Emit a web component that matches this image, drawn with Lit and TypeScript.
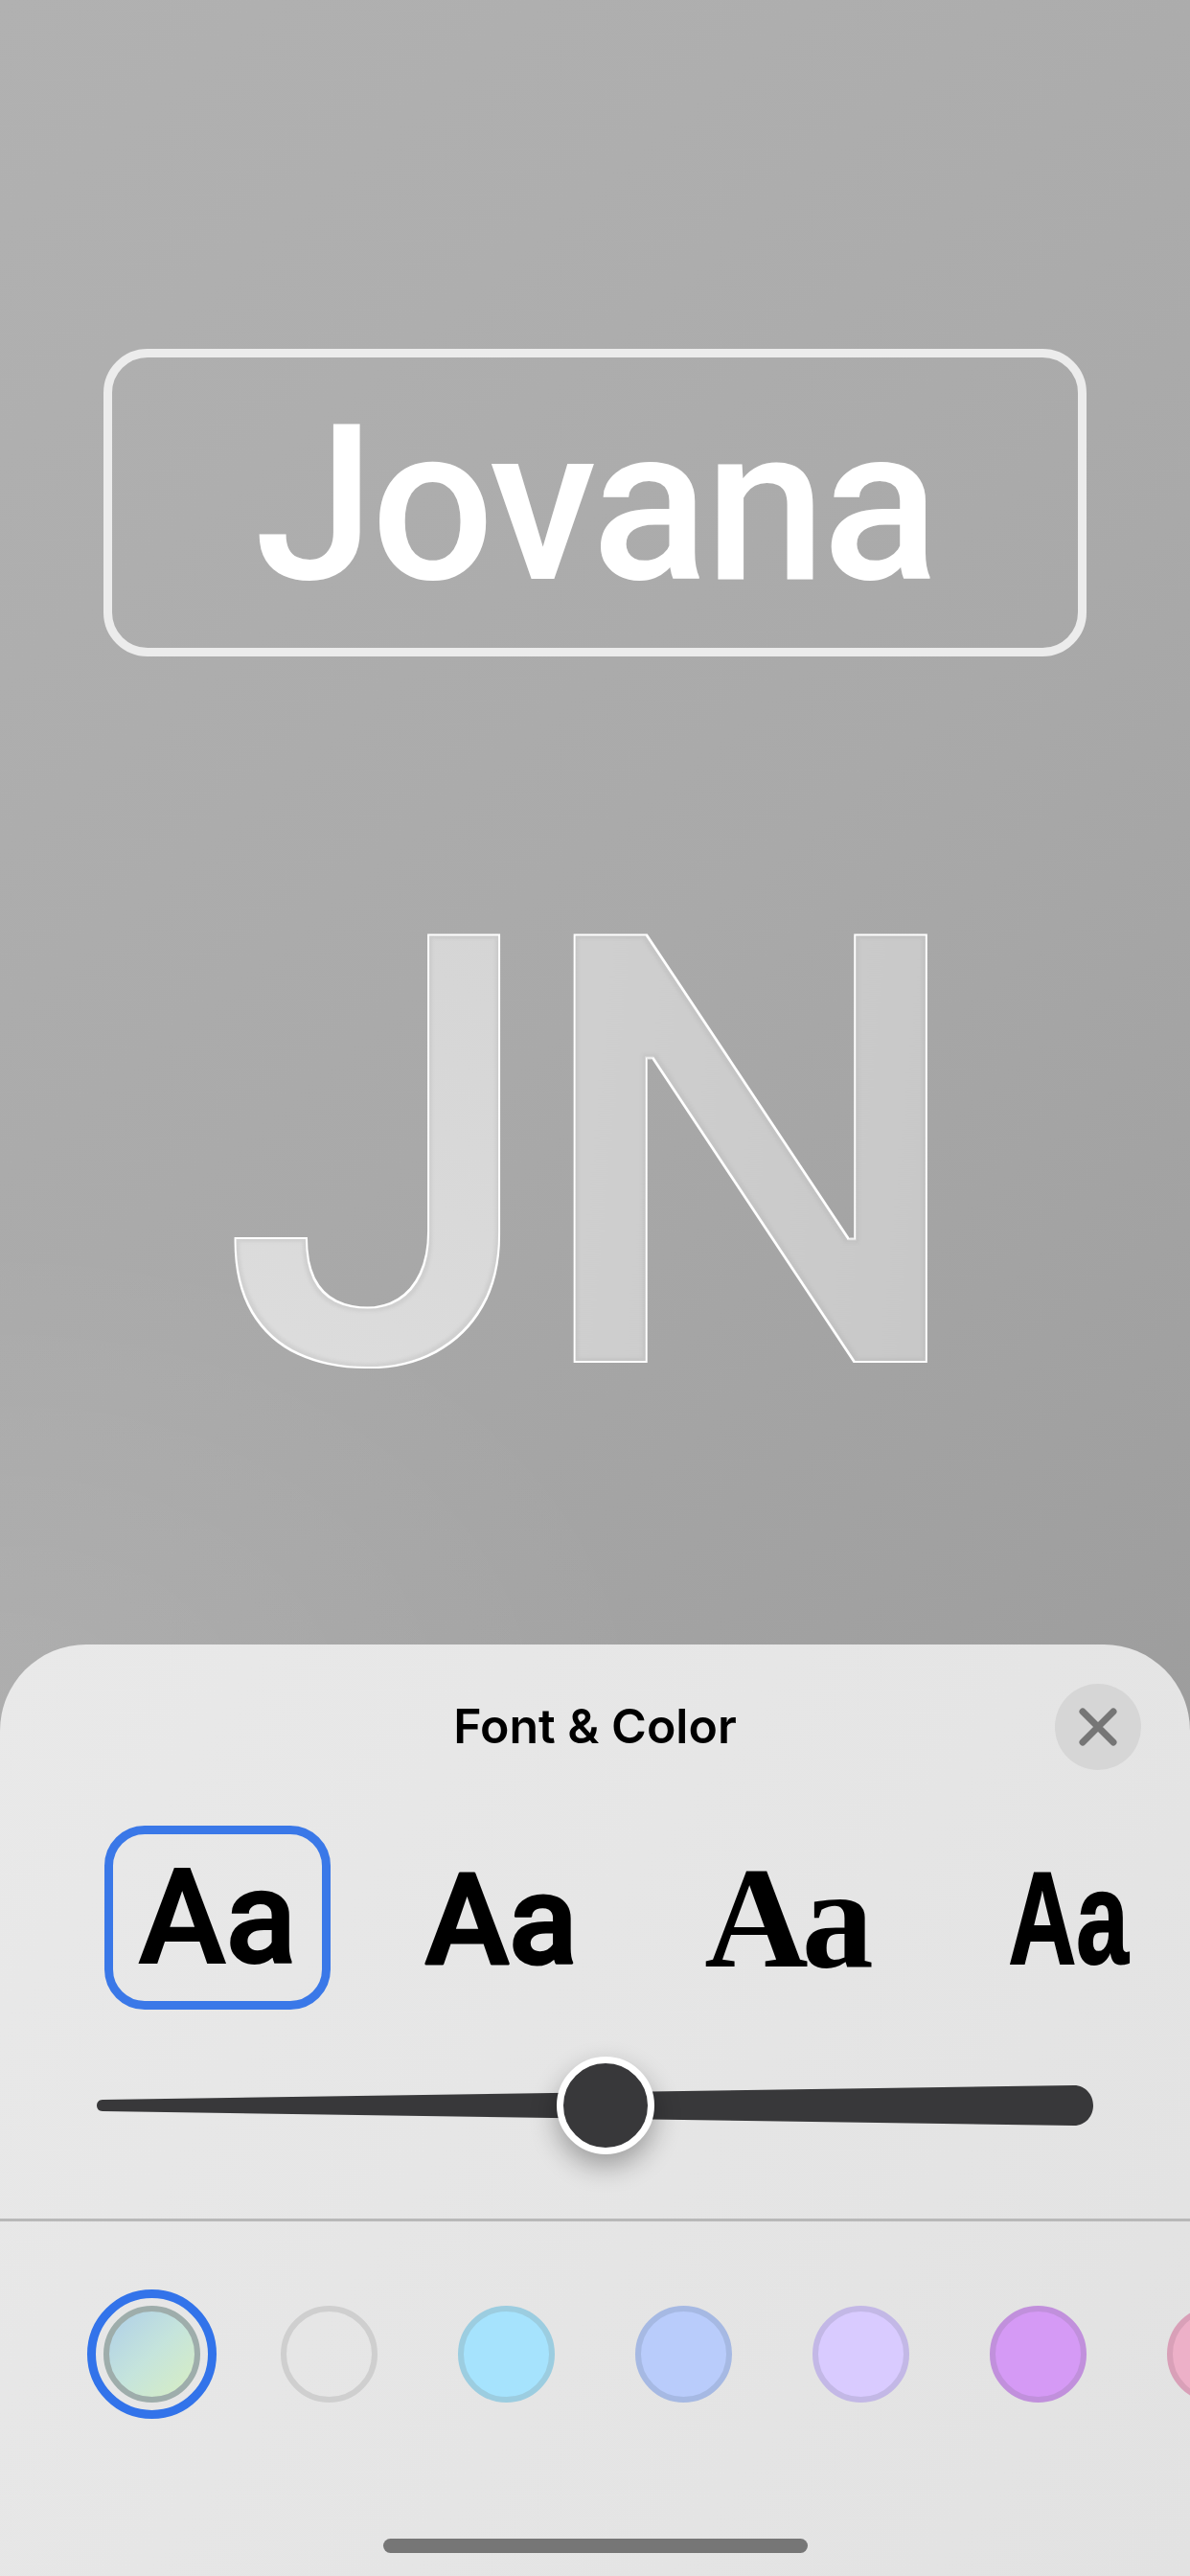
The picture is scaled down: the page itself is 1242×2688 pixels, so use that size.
import { LitElement, html, css, svg } from "lit";
import { customElement } from "lit/decorators.js";
import { styleMap } from "lit/directives/style-map.js";

const SWATCHES = [
  { bg: "transparent", ring: "#cfcfcf" },
  { bg: "#a6e3fd", ring: "#9ccde0" },
  { bg: "#b9ccfb", ring: "#a6b9e3" },
  { bg: "#d9cbff", ring: "#c3b8e6" },
  { bg: "#d59af5", ring: "#c190dc" },
  { bg: "#edb0c8", ring: "#d9a0b8" },
];

const emboss = (id: string, erode: string) => svg`
  <filter id=${id} filterUnits="userSpaceOnUse" x="-200" y="-700" width="1000" height="900" color-interpolation-filters="sRGB">
    <feMorphology in="SourceGraphic" operator="erode" radius=${erode} result="body" />
    <feMorphology in="body" operator="dilate" radius="1.6" result="outer" />
    <feFlood flood-color="#ffffff" result="white" />
    <feComposite in="white" in2="outer" operator="in" result="edge" />
    <feMorphology in="body" operator="erode" radius="3" result="core" />
    <feGaussianBlur in="core" stdDeviation="1.5" result="soft" />
    <feFlood flood-color="#a8a8a8" flood-opacity="0.22" result="grey" />
    <feComposite in="grey" in2="body" operator="in" result="greyIn" />
    <feComposite in="greyIn" in2="soft" operator="out" result="band" />
    <feMerge>
      <feMergeNode in="edge" />
      <feMergeNode in="body" />
      <feMergeNode in="band" />
    </feMerge>
  </filter>
`;

@customElement("app-root")
export class AppRoot extends LitElement {
  static styles = css`
    :host {
      display: flex;
      flex-direction: column;
      width: 1242px;
      height: 2688px;
      overflow: hidden;
      font-family: Roboto, "Liberation Sans", sans-serif;
      background-color: #a5a5a5;
      background-image:
        radial-gradient(700px 500px at 0 1780px, rgba(255, 255, 255, 0.08), transparent),
        linear-gradient(140deg, #b1b1b1 0%, #aeaeae 25%, #a9a9a9 55%, #9d9d9d 100%);
      background-size: 100% 1810px;
      background-repeat: no-repeat;
    }
    .stage {
      height: 1716px;
      flex: none;
      padding: 364px 108px 0;
      box-sizing: border-box;
    }
    .name {
      box-sizing: border-box;
      height: 321px;
      padding-top: 4px;
      border: 9px solid #ececec;
      border-radius: 46px;
      display: flex;
      align-items: center;
      justify-content: center;
      color: #fff;
      font-size: 226px;
      font-weight: 500;
      line-height: 1;
      letter-spacing: -3.5px;
    }
    .mono {
      display: block;
      margin: 135px 0 0 -108px;
    }
    .mono text {
      font-family: Roboto, "Liberation Sans", sans-serif;
      font-size: 624px;
      font-weight: 500;
    }
    .panel {
      flex: 1;
      border-radius: 90px 90px 0 0;
      background: linear-gradient(125deg, #e9e9e9, #e2e2e2);
      display: flex;
      flex-direction: column;
      overflow: hidden;
    }
    .head {
      position: relative;
      height: 172px;
      box-sizing: border-box;
      padding-top: 40px;
      text-align: center;
      font-family: Inter, sans-serif;
      font-size: 50px;
      font-weight: 600;
      line-height: 90px;
      color: #000;
    }
    .close {
      position: absolute;
      top: 41px;
      right: 51px;
      width: 90px;
      height: 90px;
      border-radius: 50%;
      background: #d6d6d6;
      display: flex;
      align-items: center;
      justify-content: center;
    }
    .fonts {
      display: flex;
      height: 192px;
      margin-top: 17px;
      padding-left: 109px;
      align-items: stretch;
    }
    .opt {
      display: flex;
      align-items: center;
      justify-content: center;
      flex: none;
      font-size: 137px;
      line-height: 1;
      color: #000;
      box-sizing: border-box;
    }
    .o1 {
      width: 236px;
      border: 9px solid #3a78e8;
      border-radius: 42px;
      font-weight: 500;
      -webkit-text-stroke: 2px #000;
    }
    .o2 {
      width: 156px;
      margin-left: 99px;
    }
    .o2 svg {
      overflow: visible;
    }
    .o2 text {
      font-family: Roboto, sans-serif;
      font-size: 132px;
      font-weight: 500;
      stroke: #000;
      stroke-width: 3px;
      stroke-linejoin: round;
    }
    .o3 {
      width: 172px;
      margin-left: 134px;
      font-family: "Liberation Serif", serif;
      font-size: 150px;
      font-weight: 700;
      letter-spacing: -7px;
    }
    .o4 {
      width: 123px;
      margin-left: 148px;
      font-family: "Liberation Sans", sans-serif;
      font-size: 138px;
      font-weight: 700;
    }
    .o4 span {
      display: inline-block;
      transform: scaleX(0.71);
      -webkit-text-stroke: 2px #000;
    }
    .slider {
      position: relative;
      height: 102px;
      margin-top: 49px;
      margin-left: 101px;
      width: 1040px;
    }
    .slider svg {
      display: block;
    }
    .thumb {
      position: absolute;
      left: 480px;
      top: 0;
      width: 102px;
      height: 102px;
      box-sizing: border-box;
      border-radius: 50%;
      background: #38383a;
      border: 7px solid #fff;
      box-shadow: 0 12px 28px rgba(0, 0, 0, 0.32);
    }
    .rule {
      height: 3px;
      background: #b8b8b8;
      margin-top: 67px;
    }
    .swatches {
      display: flex;
      align-items: center;
      gap: 84px;
      height: 135px;
      margin-top: 71px;
      padding-left: 91px;
    }
    .selected {
      flex: none;
      width: 135px;
      height: 135px;
      box-sizing: border-box;
      border-radius: 50%;
      border: 9px solid #3273ea;
      display: flex;
      align-items: center;
      justify-content: center;
      margin-right: -17px;
    }
    .swatch {
      flex: none;
      width: 101px;
      height: 101px;
      box-sizing: border-box;
      border-radius: 50%;
      border: 6px solid;
    }
    .grad {
      background: linear-gradient(135deg, #afcfe8, #c5e4dc 50%, #d8eec2);
      border-color: #9eadab;
    }
    .home {
      align-self: center;
      width: 443px;
      height: 15px;
      border-radius: 8px;
      background: #767676;
      margin-top: 125px;
    }
  `;

  render() {
    return html`
      <div class="stage">
        <div class="name">Jovana</div>
        <svg class="mono" width="1242" height="760" viewBox="0 0 1242 760" role="img" aria-label="JN">
          ${svg`
            <defs>
              <linearGradient id="gj" x1="0.6" y1="0" x2="0.3" y2="1">
                <stop offset="0" stop-color="#d4d4d4" />
                <stop offset="1" stop-color="#dedede" />
              </linearGradient>
              <linearGradient id="gn" x1="0" y1="0" x2="1" y2="0.15">
                <stop offset="0" stop-color="#d1d1d1" />
                <stop offset="1" stop-color="#c8c8c8" />
              </linearGradient>
              ${emboss("ej", "0.5 0")}
              ${emboss("en", "4 0")}
            </defs>
            <g transform="translate(233 600) scale(0.945 1)">
              <text fill="url(#gj)" filter="url(#ej)">J</text>
            </g>
            <g transform="translate(549 600) scale(1.06 1)">
              <text fill="url(#gn)" filter="url(#en)">N</text>
            </g>
          `}
        </svg>
      </div>
      <div class="panel">
        <div class="head">
          Font &amp; Color
          <div class="close">
            <svg width="44" height="44" viewBox="0 0 44 44">
              <path d="M6 6 L38 38 M38 6 L6 38" stroke="#767676" stroke-width="7" stroke-linecap="round" fill="none" />
            </svg>
          </div>
        </div>
        <div class="fonts">
          <div class="opt o1">Aa</div>
          <div class="opt o2">
            <svg width="156" height="120" viewBox="0 0 156 120"><text x="79" y="108" text-anchor="middle">Aa</text></svg>
          </div>
          <div class="opt o3">Aa</div>
          <div class="opt o4"><span>Aa</span></div>
        </div>
        <div class="slider">
          <svg width="1040" height="102" viewBox="0 0 1040 102">
            <path d="M6 45 L1020 30 C1032 30 1040 40 1040 51 C1040 62 1032 72 1020 72 L6 57 C2 57 0 54 0 51 C0 48 2 45 6 45 Z" fill="#38383a" />
          </svg>
          <div class="thumb"></div>
        </div>
        <div class="rule"></div>
        <div class="swatches">
          <div class="selected"><div class="swatch grad"></div></div>
          ${SWATCHES.map(
            (s) => html`<div class="swatch" style=${styleMap({ background: s.bg, borderColor: s.ring })}></div>`
          )}
        </div>
        <div class="home"></div>
      </div>
    `;
  }
}
